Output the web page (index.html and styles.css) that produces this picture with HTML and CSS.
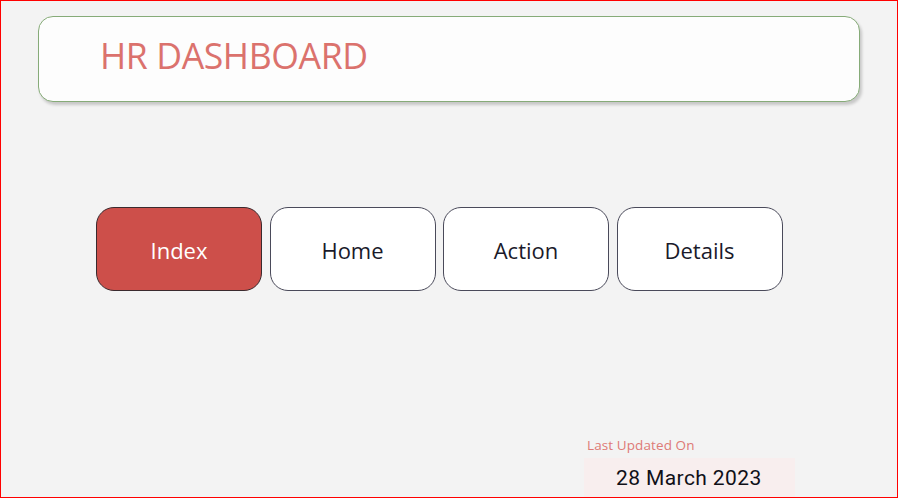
FILE: index.html
```html
<!DOCTYPE html>
<html>
<head>
<meta charset="utf-8">
<link rel="stylesheet" href="styles.css">
</head>
<body>
<div class="frame">
  <header class="title-card">
    <h1 class="title">HR DASHBOARD</h1>
  </header>
  <nav class="nav">
    <div class="btn btn-active">Index</div>
    <div class="btn">Home</div>
    <div class="btn">Action</div>
    <div class="btn">Details</div>
  </nav>
  <div class="updated">
    <div class="updated-label">Last Updated On</div>
    <div class="updated-date">28 March 2023</div>
  </div>
</div>
</body>
</html>
```

FILE: styles.css
```css
* { box-sizing: border-box; }
html, body { margin: 0; padding: 0; }
body {
  width: 898px;
  height: 498px;
  overflow: hidden;
  font-family: "Open Sans", "Noto Sans", sans-serif;
}
.frame {
  width: 898px;
  height: 498px;
  border: 1px solid #ff0000;
  background: #f3f3f3;
  display: flex;
  flex-direction: column;
  overflow: hidden;
}
.frame > * { flex-shrink: 0; }
.title-card {
  margin: 15px 0 0 37px;
  width: 822px;
  height: 86px;
  background: #fdfdfd;
  border: 1px solid #86ab78;
  border-radius: 15px;
  box-shadow: 2px 3px 3px rgba(0,0,0,0.18);
  display: flex;
  align-items: center;
  padding-left: 61px;
}
.title {
  margin: 0;
  font-weight: 400;
  font-size: 35.6px;
  color: #db726d;
  letter-spacing: -0.4px;
  line-height: 1;
  padding-bottom: 6px;
}
.nav {
  margin: 105px 0 0 95px;
  display: flex;
  gap: 7.5px;
}
.btn {
  width: 166px;
  height: 84px;
  border: 1px solid #4a4a5a;
  border-radius: 18px;
  background: #ffffff;
  display: flex;
  align-items: center;
  justify-content: center;
  font-size: 22px;
  color: #1a1a2a;
  padding-top: 1px;
}
.btn-active {
  background: #cd4f4a;
  border-color: #3a2a2e;
  color: #ffffff;
}
.updated {
  margin: 145px 0 0 583px;
  display: flex;
  flex-direction: column;
}
.updated-label {
  font-size: 13.5px;
  color: #de7a76;
  padding-left: 3px;
  line-height: 18px;
  letter-spacing: 0.1px;
}
.updated-date {
  margin-top: 4px;
  width: 211px;
  height: 40px;
  background: #f8eeee;
  font-family: "Roboto", sans-serif;
  font-size: 21px;
  color: #101018;
  padding-left: 32px;
  display: flex;
  align-items: center;
  letter-spacing: 0.4px;
}
```
